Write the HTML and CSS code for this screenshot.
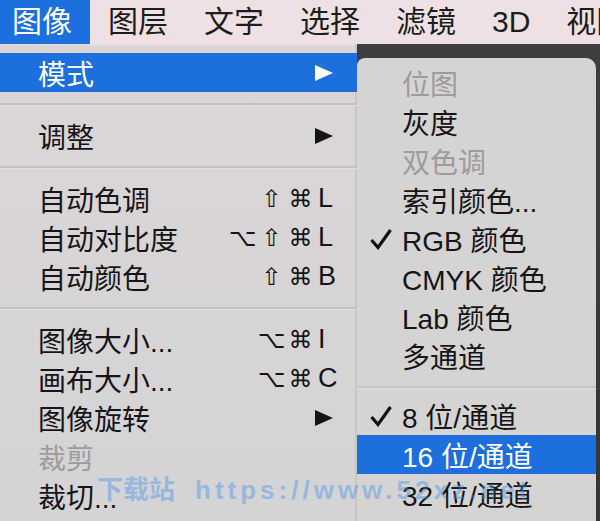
FILE: index.html
```html
<!DOCTYPE html>
<html lang="zh-CN">
<head>
  <meta charset="UTF-8">
  <title>图像菜单</title>
  <link rel="stylesheet" href="styles.css">
</head>
<body>
  <div class="screen">
    <nav class="menubar">
      <span class="bar-item active">图像</span>
      <span class="bar-item">图层</span>
      <span class="bar-item">文字</span>
      <span class="bar-item">选择</span>
      <span class="bar-item">滤镜</span>
      <span class="bar-item">3D</span>
      <span class="bar-item">视图</span>
    </nav>

    <div class="workspace">
      <div class="menu main-menu">
        <div class="item selected"><span>模式</span><span class="arrow"></span></div>
        <div class="sep"></div>
        <div class="item"><span>调整</span><span class="arrow"></span></div>
        <div class="sep"></div>
        <div class="item"><span>自动色调</span><span class="keys"><span>⇧</span><span>⌘</span><span class="key">L</span></span></div>
        <div class="item"><span>自动对比度</span><span class="keys"><span>⌥</span><span>⇧</span><span>⌘</span><span class="key">L</span></span></div>
        <div class="item"><span>自动颜色</span><span class="keys"><span>⇧</span><span>⌘</span><span class="key">B</span></span></div>
        <div class="sep"></div>
        <div class="item"><span>图像大小...</span><span class="keys"><span>⌥</span><span>⌘</span><span class="key">I</span></span></div>
        <div class="item"><span>画布大小...</span><span class="keys"><span>⌥</span><span>⌘</span><span class="key">C</span></span></div>
        <div class="item"><span>图像旋转</span><span class="arrow"></span></div>
        <div class="item disabled"><span>裁剪</span></div>
        <div class="item"><span>裁切...</span></div>
        <div class="item disabled"><span>显示全部</span></div>
      </div>

      <div class="backdrop">
        <div class="menu sub-menu">
          <div class="sub-item disabled"><span class="check"></span>位图</div>
          <div class="sub-item"><span class="check"></span>灰度</div>
          <div class="sub-item disabled"><span class="check"></span>双色调</div>
          <div class="sub-item"><span class="check"></span>索引颜色...</div>
          <div class="sub-item"><span class="check"><svg width="22" height="22" viewBox="0 0 22 22"><path d="M1.5 12 L8 19.5 L20.5 2" fill="none" stroke="#111" stroke-width="3.2"/></svg></span>RGB 颜色</div>
          <div class="sub-item"><span class="check"></span>CMYK 颜色</div>
          <div class="sub-item"><span class="check"></span>Lab 颜色</div>
          <div class="sub-item"><span class="check"></span>多通道</div>
          <div class="sub-sep"></div>
          <div class="sub-item"><span class="check"><svg width="22" height="22" viewBox="0 0 22 22"><path d="M1.5 12 L8 19.5 L20.5 2" fill="none" stroke="#111" stroke-width="3.2"/></svg></span>8 位/通道</div>
          <div class="sub-item selected"><span class="check"></span>16 位/通道</div>
          <div class="sub-item"><span class="check"></span>32 位/通道</div>
        </div>
      </div>
    </div>

    <div class="watermark">下载站<span class="url">https://www.52xz.net</span></div>
  </div>
</body>
</html>
```

FILE: styles.css
```css
* {
  box-sizing: border-box;
}

body {
  margin: 0;
  overflow: hidden;
  font-family: "Liberation Sans", "Noto Sans CJK SC", sans-serif;
}

.screen {
  position: relative;
  width: 600px;
  height: 521px;
  overflow: hidden;
  background: #3b3b3b;
}

/* top bar */
.menubar {
  display: flex;
  height: 44px;
  background: #efe1e3;
  color: #1d1d1d;
  font-size: 30px;
  line-height: 44px;
  white-space: nowrap;
}

.bar-item {
  flex-shrink: 0;
  padding: 0 18px;
}

.bar-item:first-child {
  margin-left: -6px;
}

.bar-item.active {
  background: #1c6fdc;
  color: white;
}

/* menus */
.workspace {
  display: flex;
  height: 477px;
}

.menu {
  font-size: 28px;
  color: #151515;
}

.main-menu {
  width: 357px;
  padding-top: 9px;
  background: linear-gradient(180deg, #dcd6d6, #d4d3d6);
  box-shadow: inset 0 1px 0 #e6e2e2, inset -2px 0 0 #c9c6c6;
}

.item {
  display: flex;
  justify-content: space-between;
  align-items: center;
  height: 39px;
  padding: 0 24px 0 38px;
  white-space: nowrap;
}

.item.selected {
  background: #1c6fdc;
  color: white;
}

.disabled {
  color: #9d9b9b;
}

.sep {
  height: 2px;
  margin: 11px 0;
  background: #c5c1c1;
  box-shadow: 0 1px 0 #e2dede;
}

.arrow {
  width: 0;
  height: 0;
  border-top: 8.5px solid transparent;
  border-bottom: 8.5px solid transparent;
  border-left: 18px solid #151515;
}

.selected .arrow {
  border-left-color: white;
}

.keys {
  display: flex;
  align-items: center;
  margin-right: -22px;
  font-family: "DejaVu Sans", sans-serif;
  font-size: 24px;
}

.keys span {
  width: 29px;
  text-align: center;
}

.keys .key {
  width: 37px;
  margin-left: 3px;
  font-family: "Liberation Sans", sans-serif;
  font-size: 27px;
  text-align: left;
}

/* submenu */
.backdrop {
  flex: 1;
  padding: 14px 4px 0 0;
  background: linear-gradient(180deg, #3e3e3e, #353535);
}

.sub-menu {
  height: 100%;
  padding-top: 5.5px;
  background: #d6d3d3;
  border-radius: 8px 10px 0 0;
}

.sub-item {
  display: flex;
  align-items: center;
  height: 39px;
  padding-left: 13px;
  white-space: nowrap;
}

.sub-item.selected {
  background: #1c6fdc;
  color: white;
}

.check {
  display: flex;
  align-items: center;
  width: 32px;
  height: 22px;
}

.sub-sep {
  height: 2px;
  margin: 10px 0 8.5px;
  background: #c7c3c3;
  box-shadow: 0 1px 0 #e0dcdc;
}

/* watermark over the picture */
.watermark {
  position: absolute;
  left: 97px;
  top: 472px;
  font-size: 26px;
  font-weight: bold;
  line-height: 36px;
  color: rgba(50, 140, 230, 0.4);
  white-space: nowrap;
  pointer-events: none;
}

.watermark .url {
  margin-left: 20px;
  letter-spacing: 4px;
}
```
